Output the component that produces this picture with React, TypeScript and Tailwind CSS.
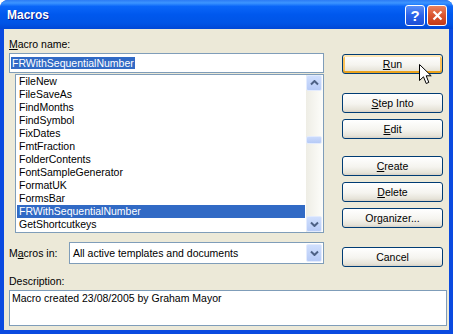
import React from "react";

const macros = [
  "FileNew",
  "FileSaveAs",
  "FindMonths",
  "FindSymbol",
  "FixDates",
  "FmtFraction",
  "FolderContents",
  "FontSampleGenerator",
  "FormatUK",
  "FormsBar",
  "FRWithSequentialNumber",
  "GetShortcutkeys",
];

function Chevron({ down }: { down?: boolean }) {
  return (
    <svg width="9" height="6" viewBox="0 0 9 6">
      <polyline
        points={down ? "1,1.5 4.5,5 8,1.5" : "1,4.5 4.5,1 8,4.5"}
        fill="none"
        stroke="#4D6185"
        strokeWidth="2"
      />
    </svg>
  );
}

function ArrowBox({ down, className = "" }: { down?: boolean; className?: string }) {
  return (
    <div
      className={`flex items-center justify-center rounded-[2px] border border-[#E3EBFD] bg-[linear-gradient(to_bottom,#D0DFFD,#B7CBF7)] ${className}`}
    >
      <Chevron down={down} />
    </div>
  );
}

function XpButton({
  children,
  focused,
  className = "",
}: {
  children: React.ReactNode;
  focused?: boolean;
  className?: string;
}) {
  return (
    <div
      className={`relative flex h-[20px] w-[101px] items-center justify-center rounded-[3px] border border-[#003C74] bg-[linear-gradient(to_bottom,#FFFFFF_0%,#F5F4EF_55%,#E6E3D8_88%,#D6D0C5_100%)] text-black ${
        focused
          ? "shadow-[inset_0_2px_0_#FFE7B5,inset_0_-2px_0_#E9A21D,inset_2px_0_0_#F9C15A,inset_-2px_0_0_#F9C15A]"
          : ""
      } ${className}`}
    >
      {children}
    </div>
  );
}

export default function App() {
  return (
    <div className="flex h-[334px] w-[453px] flex-col overflow-hidden rounded-t-[8px] bg-[#0A4AE0] font-['Liberation_Sans',Arial,sans-serif] text-[10.5px] leading-[13px] text-black">
      {/* title bar */}
      <div className="flex h-[29px] items-center bg-[linear-gradient(to_bottom,#2C7BF5_0%,#3D95FF_10%,#0A66F8_22%,#0058EE_50%,#0054E6_80%,#0047D6_100%)] pl-[7px] pr-[6px]">
        <span className="pt-[2px] text-[12px] font-bold text-white [text-shadow:1px_1px_0_#0A1A8C]">
          Macros
        </span>
        <div className="ml-auto mt-[2px] flex gap-[2px]">
          <div className="flex h-[21px] w-[20px] items-center justify-center rounded-[3px] border border-white bg-[linear-gradient(to_bottom,#5B8FF7,#2A62EA_50%,#1C4FD6)] text-[15px] font-bold leading-none text-white">
            ?
          </div>
          <div className="flex h-[21px] w-[20px] items-center justify-center rounded-[3px] border border-white bg-[linear-gradient(to_bottom,#E9825E,#DA5530_50%,#C23A17)]">
            <svg width="11" height="11" viewBox="0 0 11 11">
              <path d="M1.5 1.5 L9.5 9.5 M9.5 1.5 L1.5 9.5" stroke="white" strokeWidth="2.2" />
            </svg>
          </div>
        </div>
      </div>

      {/* client area */}
      <div className="mx-[4px] flex h-[301px] flex-col bg-[#ECE9D8] px-[5px]">
        <div className="flex">
          <div className="flex w-[315px] flex-col">
            <div className="mt-[9px]">
              <span className="underline">M</span>acro name:
            </div>
            <div className="mt-[2px] flex h-[20px] items-center border border-[#7F9DB9] bg-white pl-[1px]">
              <span className="bg-[#316AC5] px-[1px] leading-[12px] text-white">
                FRWithSequentialNumber
              </span>
            </div>
            <div className="ml-[6px] mt-[1px] flex h-[159px] w-[309px] border border-[#7F9DB9] bg-white">
              <div className="flex flex-1 flex-col px-[1px]">
                {macros.map((m) => (
                  <div
                    key={m}
                    className={`h-[13px] pl-[2px] ${
                      m === "FRWithSequentialNumber" ? "bg-[#316AC5] text-white" : ""
                    }`}
                  >
                    {m}
                  </div>
                ))}
              </div>
              <div className="flex w-[17px] flex-col bg-[linear-gradient(to_right,#EEEDE5,#FDFDFA)]">
                <ArrowBox className="h-[16px] w-[16px]" />
                <div className="mt-[45px] h-[8px] w-[16px] rounded-[2px] border border-[#E3EBFD] bg-[linear-gradient(to_bottom,#CADAFC,#B6CAF6)]" />
                <ArrowBox down className="mt-auto h-[16px] w-[16px]" />
              </div>
            </div>
            <div className="mt-[9px] flex h-[22px] items-center">
              <div className="w-[60px]">
                M<span className="underline">a</span>cros in:
              </div>
              <div className="flex h-[22px] flex-1 items-center border border-[#7F9DB9] bg-white pl-[3px]">
                <span>All active templates and documents</span>
                <ArrowBox down className="ml-auto mr-[1px] h-[18px] w-[16px]" />
              </div>
            </div>
          </div>

          <div className="ml-[18px] flex flex-col">
            <XpButton focused className="mt-[25px]">
              <span>
                <span className="underline">R</span>un
              </span>
              <svg
                className="absolute left-[76px] top-[9px]"
                width="13"
                height="21"
                viewBox="0 0 13 21"
              >
                <path
                  d="M0.5 0.5 L0.5 16.5 L4.5 12.8 L7.2 19.5 L9.8 18.4 L7.2 11.8 L12.2 11.8 Z"
                  fill="white"
                  stroke="black"
                  strokeWidth="1"
                />
              </svg>
            </XpButton>
            <XpButton className="mt-[19px]">
              <span>
                <span className="underline">S</span>tep Into
              </span>
            </XpButton>
            <XpButton className="mt-[6px]">
              <span>
                <span className="underline">E</span>dit
              </span>
            </XpButton>
            <XpButton className="mt-[17px]">
              <span>
                <span className="underline">C</span>reate
              </span>
            </XpButton>
            <XpButton className="mt-[6px]">
              <span>
                <span className="underline">D</span>elete
              </span>
            </XpButton>
            <XpButton className="mt-[6px]">
              <span>
                Or<span className="underline">g</span>anizer...
              </span>
            </XpButton>
            <XpButton className="mt-[19px]">Cancel</XpButton>
          </div>
        </div>

        <div className="mt-[8px]">Description:</div>
        <div className="mt-[2px] h-[36px] w-[438px] border border-[#7F9DB9] bg-white pl-[2px] pt-[1px]">
          Macro created 23/08/2005 by Graham Mayor
        </div>
      </div>
    </div>
  );
}
